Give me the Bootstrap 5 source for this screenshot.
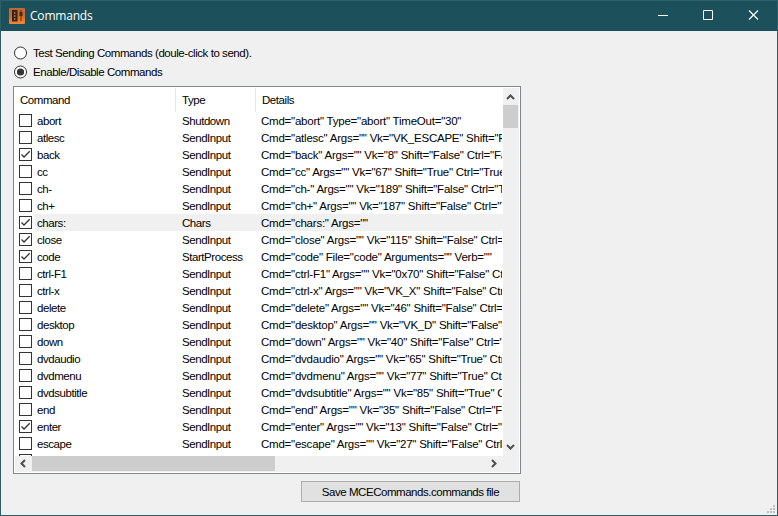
<!DOCTYPE html>
<html lang="en">
<head>
<meta charset="utf-8">
<title>Commands</title>
<link href="https://cdn.jsdelivr.net/npm/bootstrap@5.3.0/dist/css/bootstrap.min.css" rel="stylesheet">
<style>
body{font:11.5px/17px "Liberation Sans",Arial,sans-serif;letter-spacing:-.44px;color:#000;background:#f0f0f0}
.window{width:778px;height:516px;border:1px solid #2b5f69;background:#f0f0f0}
.titlebar{height:30px;background:#1c505a;color:#fff;padding-left:8px}
.titlebar h1{font:12px/16px "Open Sans","Noto Sans",sans-serif;letter-spacing:-.2px;margin:0 0 0 5px}
.cap{width:45px;height:30px}
.client{padding:12px 0 0 12px}
.opt{height:19px;gap:6px}
.opt span{padding-top:1px}
.listbox{width:508px;height:388px;border:1px solid #828790;background:#fff;padding:1px;margin-top:5px}
.view{width:488px;height:368px}
.heads{height:24px}
.heads>div{padding:0 0 0 6px;line-height:24px;border-right:1px solid #e5e5e5}
.heads>div:first-child{padding-left:5px}
.heads>div:last-child{border:0}
.c1{width:161px}.c2{width:80px}.c3{width:247px}
.entry{height:17px;line-height:18px}
.entry .box{width:13px;height:13px;border:1px solid #333;background:#fff;margin:2px 3px 2px 4px}
.entry .box svg{display:block}
.entry .cells{width:468px}
.entry .n{width:147px;padding-left:2px}
.entry .t{width:79px}
.entry .d{width:241px;letter-spacing:-.23px}
.sel .cells{background:#f0f0f0}
.vbar{width:16px;height:368px;background:#f0f0f0}
.hbar{height:16px;background:#f0f0f0}
.thumb{background:#cdcdcd}
.vbar .thumb{width:15px}
.save{width:219px;height:21px;margin:7px 0 0 288px;background:#e1e1e1;border:1px solid #adadad;border-radius:0;font-size:11.5px;line-height:20px;padding:0;letter-spacing:-.46px;color:#000}
.grip{right:2px;bottom:2px}
</style>
<script src="https://cdn.jsdelivr.net/npm/bootstrap@5.3.0/dist/js/bootstrap.bundle.min.js"></script>
</head>
<body class="overflow-hidden">
<div class="window position-relative">
  <header class="titlebar d-flex align-items-center">
    <svg width="16" height="16" viewBox="0 0 16 16"><defs><linearGradient id="g" x2="0" y2="1"><stop stop-color="#b9693a"/><stop offset=".5" stop-color="#cf6b22"/><stop offset="1" stop-color="#f0883a"/></linearGradient></defs><rect width="16" height="16" rx="1" fill="url(#g)"/><path d="M3 2h5.500v11.500H3z" fill="#39241b"/><path d="M5 4h1.500v2H5zM5 7h1.500v2H5zM5 10h1.500v2H5z" fill="#a8643c"/><path d="M12 2v11" stroke="#5a3018"/><path d="M10.500 4h3v4h-3z" fill="#4a2818"/></svg>
    <h1>Commands</h1>
    <div class="d-flex ms-auto">
      <svg class="cap" viewBox="0 0 45 30"><path d="M16 14.500h10" stroke="#fff"/></svg>
      <svg class="cap" viewBox="0 0 45 30"><path d="M16.500 9.500h9v9h-9z" fill="none" stroke="#fff"/></svg>
      <svg class="cap" viewBox="0 0 45 30"><path d="M17 9.500l9 9M26 9.500l-9 9" stroke="#fff" stroke-width="1.100"/></svg>
    </div>
  </header>
  <main class="client">
    <div class="opt d-flex align-items-center"><svg width="14" height="14"><circle cx="7.500" cy="7" r="6" fill="#fff" stroke="#333"/></svg><span>Test Sending Commands (doule-click to send).</span></div>
    <div class="opt d-flex align-items-center"><svg width="14" height="14"><circle cx="7.500" cy="7" r="6" fill="#fff" stroke="#333"/><circle cx="7.500" cy="7" r="3.600" fill="#333"/></svg><span>Enable/Disable Commands</span></div>
    <div class="listbox">
      <div class="d-flex">
        <div class="view overflow-hidden">
          <div class="heads d-flex"><div class="c1">Command</div><div class="c2">Type</div><div class="c3">Details</div></div>
          <div id="entries"></div>
        </div>
        <div class="vbar d-flex flex-column">
          <svg width="16" height="17"><path d="M4 11L7.500 7.500L11 11" fill="none" stroke="#505050" stroke-width="2"/></svg>
          <div class="thumb" style="height:23px"></div>
          <svg class="mt-auto" width="16" height="17"><path d="M4 6L7.500 9.500L11 6" fill="none" stroke="#505050" stroke-width="2"/></svg>
        </div>
      </div>
      <div class="hbar d-flex">
        <svg width="17" height="16"><path d="M10 4L6.500 7.500L10 11" fill="none" stroke="#505050" stroke-width="2"/></svg>
        <div class="thumb" style="width:243px;height:15px"></div>
        <svg style="margin-left:211px" width="17" height="16"><path d="M6 4L9.500 7.500L6 11" fill="none" stroke="#505050" stroke-width="2"/></svg>
      </div>
    </div>
    <button class="save btn d-block">Save MCECommands.commands file</button>
  </main>
  <svg class="grip position-absolute" width="8" height="8"><path d="M6 0h2v2H6zM3 3h2v2H3zM6 3h2v2H6zM0 6h2v2H0zM3 6h2v2H3zM6 6h2v2H6z" fill="#bfbfbf"/></svg>
</div>
<script>
const input=(name,vk,shift="False",ctrl="False",on=0)=>[name,"SendInput",`Cmd="${name}" Args="" Vk="${vk}" Shift="${shift}" Ctrl="${ctrl}"`,on];
const commands=[
  ["abort","Shutdown",'Cmd="abort" Type="abort" TimeOut="30"',0],
  input("atlesc","VK_ESCAPE"),
  input("back","8","False","False",1),
  input("cc","67","True","True"),
  input("ch-","189","False","True"),
  input("ch+","187","False","True"),
  ["chars:","Chars",'Cmd="chars:" Args=""',1],
  input("close","115","False","False",1),
  ["code","StartProcess",'Cmd="code" File="code" Arguments="" Verb=""',1],
  input("ctrl-F1","0x70"),
  input("ctrl-x","VK_X"),
  input("delete","46"),
  input("desktop","VK_D"),
  input("down","40"),
  input("dvdaudio","65","True","True"),
  input("dvdmenu","77","True","True"),
  input("dvdsubtitle","85","True","True"),
  input("end","35"),
  input("enter","13","False","False",1),
  input("escape","27"),
  ["","","",0]
];
const tick='<svg width="11" height="11"><path d="M1.500 5.500L4 8L9.700 2.300" fill="none" stroke="#333" stroke-width="1.300"/></svg>';
document.getElementById("entries").innerHTML=commands.map(([n,t,d,on])=>
  `<div class="entry d-flex ${n==="chars:"?"sel":""}"><span class="box flex-shrink-0">${on?tick:""}</span><div class="cells d-flex text-nowrap"><span class="n flex-shrink-0">${n}</span><span class="t flex-shrink-0">${t}</span><span class="d overflow-hidden">${d}</span></div></div>`).join("");
</script>
</body>
</html>
